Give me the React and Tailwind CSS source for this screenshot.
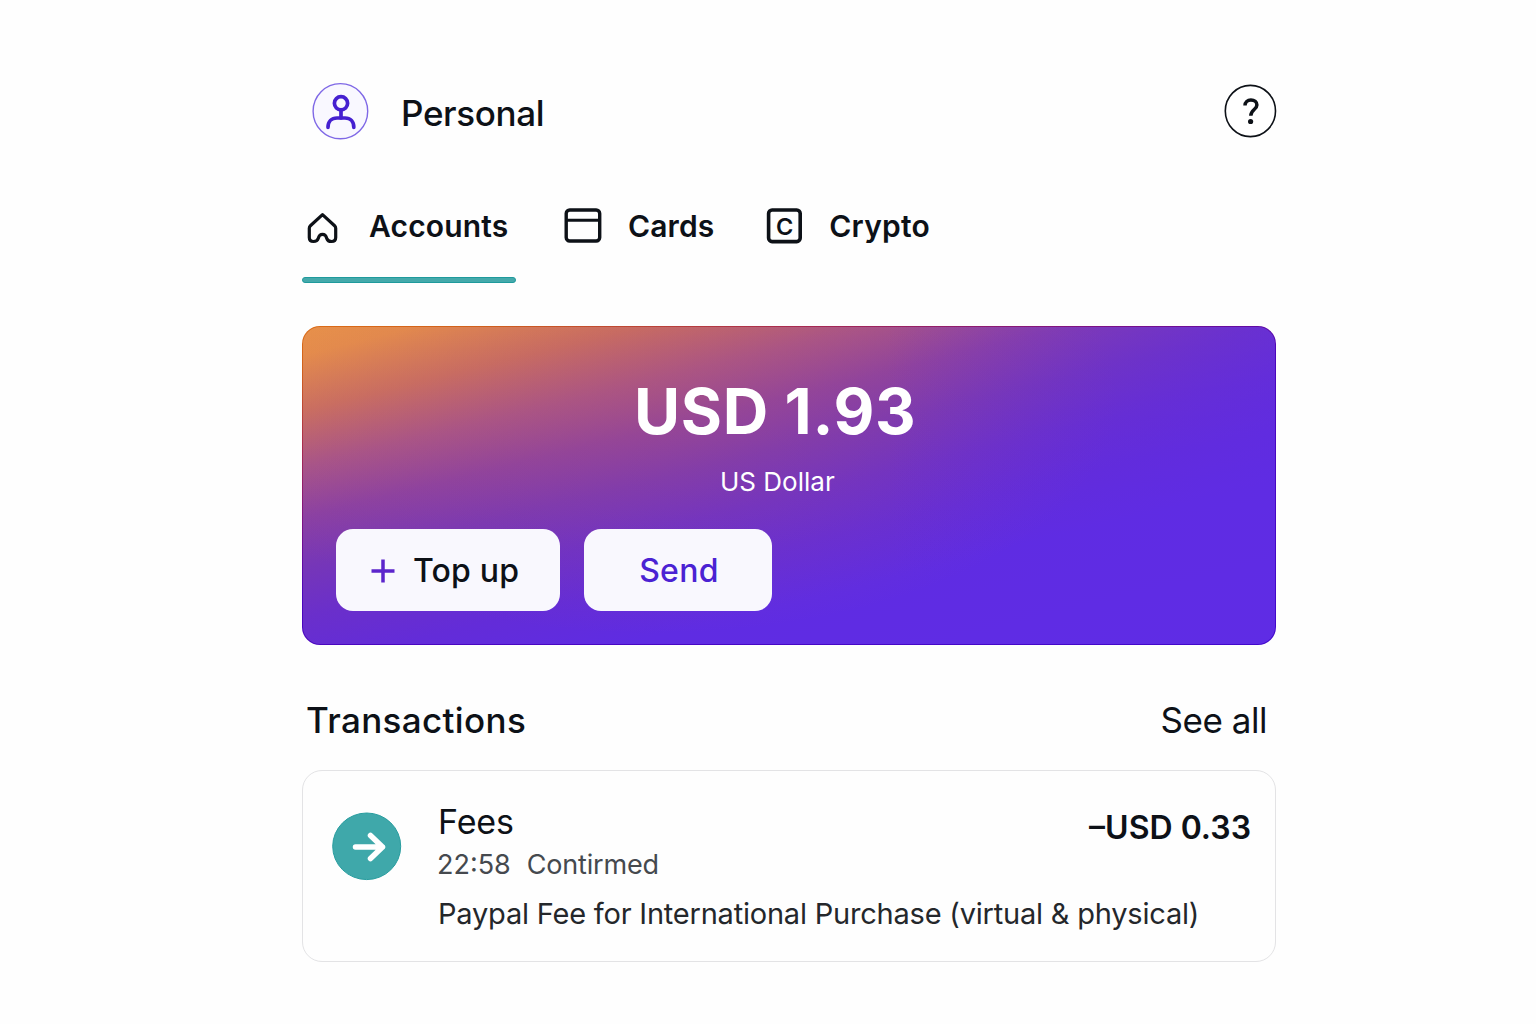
import React from "react";

const ink = "#0d1117";

function PersonIcon() {
  return (
    <svg width="57" height="58" viewBox="0 0 57 58" fill="none" className="shrink-0">
      <ellipse cx="28.4" cy="29.2" rx="27.3" ry="27.6" fill="#f9f8ff" stroke="#7f68e6" strokeWidth="1.4" />
      <g stroke="#4520d0" strokeWidth="3.7" strokeLinecap="round">
        <circle cx="29" cy="21.3" r="6.6" />
        <path d="M29 28V36" />
        <path d="M16 45.300C16 39.500 19.500 36 25 36H33C38.500 36 41.800 39.500 41.800 45.300" />
      </g>
    </svg>
  );
}

function HelpIcon() {
  return (
    <svg width="53" height="54" viewBox="0 0 53 54" fill="none" className="-mr-px shrink-0">
      <ellipse cx="26.400" cy="27" rx="25.100" ry="25.600" fill="#fff" stroke={ink} strokeWidth="1.600" />
      <path d="M21 21.600C21 18 23.600 16 26.900 16C30.500 16 32.900 18.100 32.900 21C32.900 25.600 26.800 25.600 26.800 31.800" stroke={ink} strokeWidth="3.500" />
      <circle cx="26.600" cy="37.500" r="2.600" fill={ink} />
    </svg>
  );
}

function HomeIcon() {
  return (
    <svg width="32" height="34" viewBox="0 0 32 34" fill="none" className="shrink-0">
      <path
        d="M15.500 3.600L3.400 14.700Q2.300 15.700 2.300 17.300V26.500Q2.300 30.500 6.500 30.500C9.500 30.500 10.500 29.800 11.200 27.500C12.100 24.300 12.900 23.400 15.500 23.400C18.100 23.400 18.900 24.300 19.800 27.500C20.500 29.800 21.500 30.500 24.500 30.500Q28.700 30.500 28.700 26.500V17.300Q28.700 15.700 27.600 14.700Z"
        stroke={ink}
        strokeWidth="3.200"
        strokeLinejoin="round"
      />
    </svg>
  );
}

function CardIcon() {
  return (
    <svg width="38" height="36" viewBox="0 0 38 36" fill="none" className="shrink-0">
      <rect x="2.200" y="2" width="33.500" height="31" rx="3.500" stroke={ink} strokeWidth="3.400" />
      <path d="M2 12.200H35.500" stroke={ink} strokeWidth="3" />
    </svg>
  );
}

function CryptoIcon() {
  return (
    <svg width="37" height="36" viewBox="0 0 37 36" fill="none" className="shrink-0">
      <rect x="3.600" y="2" width="31.600" height="31.600" rx="3.500" stroke={ink} strokeWidth="3.600" />
      <text x="19.700" y="26.600" textAnchor="middle" fill={ink} fontSize="23.500" fontWeight="600">C</text>
    </svg>
  );
}

function Tabs() {
  return (
    <nav className="mt-[61px] flex h-[82px] text-[30px] font-semibold leading-[48px]">
      <div className="flex w-[214px] flex-col justify-between">
        <div className="flex h-[49px] items-center">
          <div className="ml-[5px] mt-[4px]"><HomeIcon /></div>
          <span className="ml-[30px] tracking-[0.150px]">Accounts</span>
        </div>
        <div className="h-[6px] rounded-full border border-[#1f9a9c] bg-[#45a9ab]" />
      </div>
      <div className="ml-[48px] flex h-[49px] items-center">
        <CardIcon />
        <span className="ml-[26px] tracking-[0.100px]">Cards</span>
      </div>
      <div className="ml-[51px] flex h-[49px] items-center">
        <CryptoIcon />
        <span className="ml-[27px] tracking-[0.200px]">Crypto</span>
      </div>
    </nav>
  );
}

function BalanceCard() {
  return (
    <section className="mt-[43px] h-[319px] w-[974px] rounded-[18px] bg-[linear-gradient(166deg,#dc6c16_0%,#d0601c_8%,#a82a50_22%,#7a1088_36%,#4c06bc_48%,#4208cc_100%)] p-px">
      <div className="flex h-full flex-col rounded-[17px] bg-[linear-gradient(to_right,#5f2ce400_60%,#5f2ce499_100%),radial-gradient(ellipse_48%_75%_at_36%_22%,#b8586c4d_0%,#b8586c26_50%,#b8586c00_100%),linear-gradient(166deg,#ea9448_0%,#e78f4a_5%,#cb7060_15%,#a7548a_25%,#8a40a4_34%,#7636b8_43%,#6a2fcb_52%,#632cd8_61%,#5f2ce2_71%,#5f2ce6_100%)] px-[33px]">
        <div className="ml-[298px] mt-[52px] h-[64px] whitespace-nowrap text-[63px] font-bold leading-[64px] tracking-[0.700px] text-white">USD 1.93</div>
        <div className="ml-[384px] mt-[22px] h-[34px] whitespace-nowrap text-[26px] leading-[34px] text-white">US Dollar</div>
        <div className="mt-[30px] flex gap-[24px]">
          <button className="flex h-[82px] w-[224px] items-center rounded-[17px] bg-[#f9f8fe] pl-[35px] pt-[2px] text-[32px] font-medium">
            <svg width="24" height="24" viewBox="0 0 24 24" fill="none" stroke="#5c25cc" strokeWidth="3.500"><path d="M0.500 12H23.500M12 0.500V23.500" /></svg>
            <span className="ml-[18px] whitespace-nowrap tracking-[0.200px]">Top up</span>
          </button>
          <button className="h-[82px] w-[188px] rounded-[17px] bg-[#f9f8fe] pl-[2px] pt-[2px] text-[32px] font-medium tracking-[0.300px] text-[#4b22d3]">Send</button>
        </div>
      </div>
    </section>
  );
}

function Transaction() {
  return (
    <article className="mt-[25px] flex h-[192px] w-[974px] rounded-[20px] border border-[#e3e3e5] pl-[29px] pr-[24px]">
      <svg width="70" height="69" viewBox="0 0 70 69" fill="none" className="mt-[41px] shrink-0">
        <ellipse cx="34.700" cy="34.300" rx="34" ry="33.300" fill="#3fa8aa" stroke="#289d9f" />
        <path d="M23.500 35H50.500M38.500 23.500L50.500 35L38.500 46.500" stroke="#fff" strokeWidth="5.500" strokeLinecap="round" strokeLinejoin="round" />
      </svg>
      <div className="ml-[36px] min-w-0 flex-1">
        <div className="mt-[28px] flex h-[44px] items-center justify-between">
          <span className="text-[34px] tracking-[-0.100px]">Fees</span>
          <span className="mt-[14px] whitespace-nowrap text-[32px] font-semibold">–USD 0.33</span>
        </div>
        <div className="-ml-px mt-[4px] flex h-[36px] items-center gap-[16px] text-[27px] text-[#45494e]">
          <span>22:58</span>
          <span className="tracking-[-0.200px]">Contirmed</span>
        </div>
        <div className="mt-[11px] h-[40px] whitespace-nowrap text-[29px] leading-[40px] tracking-[-0.210px] text-[#24272b]">
          Paypal Fee for International Purchase (virtual &amp; physical)
        </div>
      </div>
    </article>
  );
}

export default function App() {
  return (
    <main className="h-[1024px] w-[1536px] overflow-hidden bg-[#fefefe] pl-[302px] pt-[82px] font-['Inter',sans-serif] text-[#0d1117]">
      <header className="flex h-[58px] w-[974px] items-center">
        <div className="ml-[10px]"><PersonIcon /></div>
        <h1 className="ml-[32px] flex-1 pt-[5px] text-[35px] font-medium tracking-[-0.350px]">Personal</h1>
        <HelpIcon />
      </header>
      <Tabs />
      <BalanceCard />
      <div className="mt-[50px] flex h-[50px] w-[974px] items-center justify-between pl-[4px] pr-[9px]">
        <h2 className="text-[35px] font-medium tracking-[0.350px]">Transactions</h2>
        <span className="text-[35px] tracking-[-0.450px]">See all</span>
      </div>
      <Transaction />
    </main>
  );
}
